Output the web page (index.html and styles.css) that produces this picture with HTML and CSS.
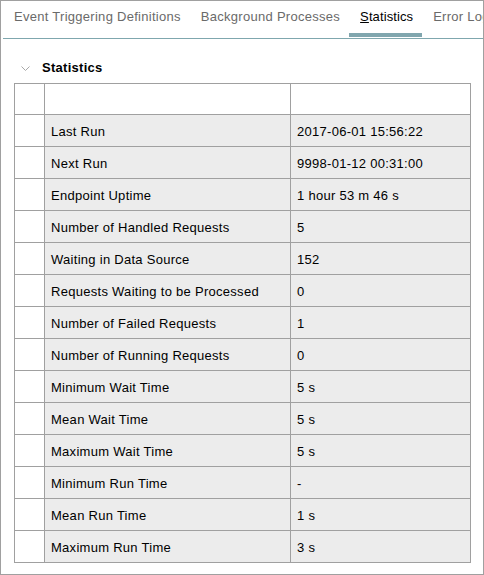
FILE: index.html
```html
<!DOCTYPE html>
<html>
<head>
<meta charset="utf-8">
<link rel="stylesheet" href="styles.css">
</head>
<body>
<div class="frame">
  <div class="tabs">
    <div class="tab">Event Triggering Definitions</div>
    <div class="tab">Background Processes</div>
    <div class="tab active"><span class="ak">S</span>tatistics</div>
    <div class="tab">Error Log</div>
  </div>
  <div class="section-head">
    <svg class="chev" width="9" height="5" viewBox="0 0 9 5"><polyline points="0.5,0.5 4.5,4.5 8.5,0.5" fill="none" stroke="#a8a8a8" stroke-width="1"/></svg>
    <span class="section-title">Statistics</span>
  </div>
  <div class="grid">
    <div class="c c1 hd"></div><div class="c c2 hd"></div><div class="c c3 hd"></div>
    <div class="c c1"></div><div class="c c2">Last Run</div><div class="c c3">2017-06-01 15:56:22</div>
    <div class="c c1"></div><div class="c c2">Next Run</div><div class="c c3">9998-01-12 00:31:00</div>
    <div class="c c1"></div><div class="c c2">Endpoint Uptime</div><div class="c c3">1 hour 53 m 46 s</div>
    <div class="c c1"></div><div class="c c2">Number of Handled Requests</div><div class="c c3">5</div>
    <div class="c c1"></div><div class="c c2">Waiting in Data Source</div><div class="c c3">152</div>
    <div class="c c1"></div><div class="c c2">Requests Waiting to be Processed</div><div class="c c3">0</div>
    <div class="c c1"></div><div class="c c2">Number of Failed Requests</div><div class="c c3">1</div>
    <div class="c c1"></div><div class="c c2">Number of Running Requests</div><div class="c c3">0</div>
    <div class="c c1"></div><div class="c c2">Minimum Wait Time</div><div class="c c3">5 s</div>
    <div class="c c1"></div><div class="c c2">Mean Wait Time</div><div class="c c3">5 s</div>
    <div class="c c1"></div><div class="c c2">Maximum Wait Time</div><div class="c c3">5 s</div>
    <div class="c c1"></div><div class="c c2">Minimum Run Time</div><div class="c c3">-</div>
    <div class="c c1"></div><div class="c c2">Mean Run Time</div><div class="c c3">1 s</div>
    <div class="c c1"></div><div class="c c2">Maximum Run Time</div><div class="c c3">3 s</div>
  </div>
</div>
</body>
</html>
```

FILE: styles.css
```css
html, body {
  margin: 0;
  padding: 0;
  background: #ffffff;
}
body {
  font-family: "Liberation Sans", Arial, sans-serif;
  font-size: 13px;
  letter-spacing: 0.28px;
  color: #000;
}
.frame {
  width: 484px;
  height: 575px;
  box-sizing: border-box;
  border: 1px solid #a0a0a0;
  overflow: hidden;
}
.tabs {
  display: flex;
  margin-left: 2px;
  height: 37px;
  border-bottom: 1px solid #7fa7ae;
  white-space: nowrap;
}
.tab {
  flex-shrink: 0;
  padding: 8px 9px 0 11px;
  line-height: 16px;
  color: #6a6a6a;
  box-sizing: border-box;
  height: 36px;
}
.tab.active {
  color: #000;
  letter-spacing: 0.1px;
  border-bottom: 4px solid #80a6ae;
}
.ak {
  text-decoration: underline;
}
.section-head {
  display: flex;
  align-items: center;
  margin: 21px 0 0 20px;
  height: 16px;
  line-height: 16px;
}
.chev {
  display: block;
  margin-right: 12px;
}
.section-title {
  font-weight: bold;
}
.grid {
  display: grid;
  grid-template-columns: 30px 246px 180px;
  margin: 7px 0 0 13px;
  width: max-content;
  border-top: 1px solid #a0a0a0;
  border-left: 1px solid #a0a0a0;
}
.c {
  box-sizing: border-box;
  height: 32px;
  border-right: 1px solid #a0a0a0;
  border-bottom: 1px solid #a0a0a0;
  padding: 3px 0 0 6px;
  line-height: 28px;
  white-space: nowrap;
  background: #ececec;
}
.c.hd {
  height: 31px;
  background: #fff;
}
.c1 {
  background: #fff;
}
```
